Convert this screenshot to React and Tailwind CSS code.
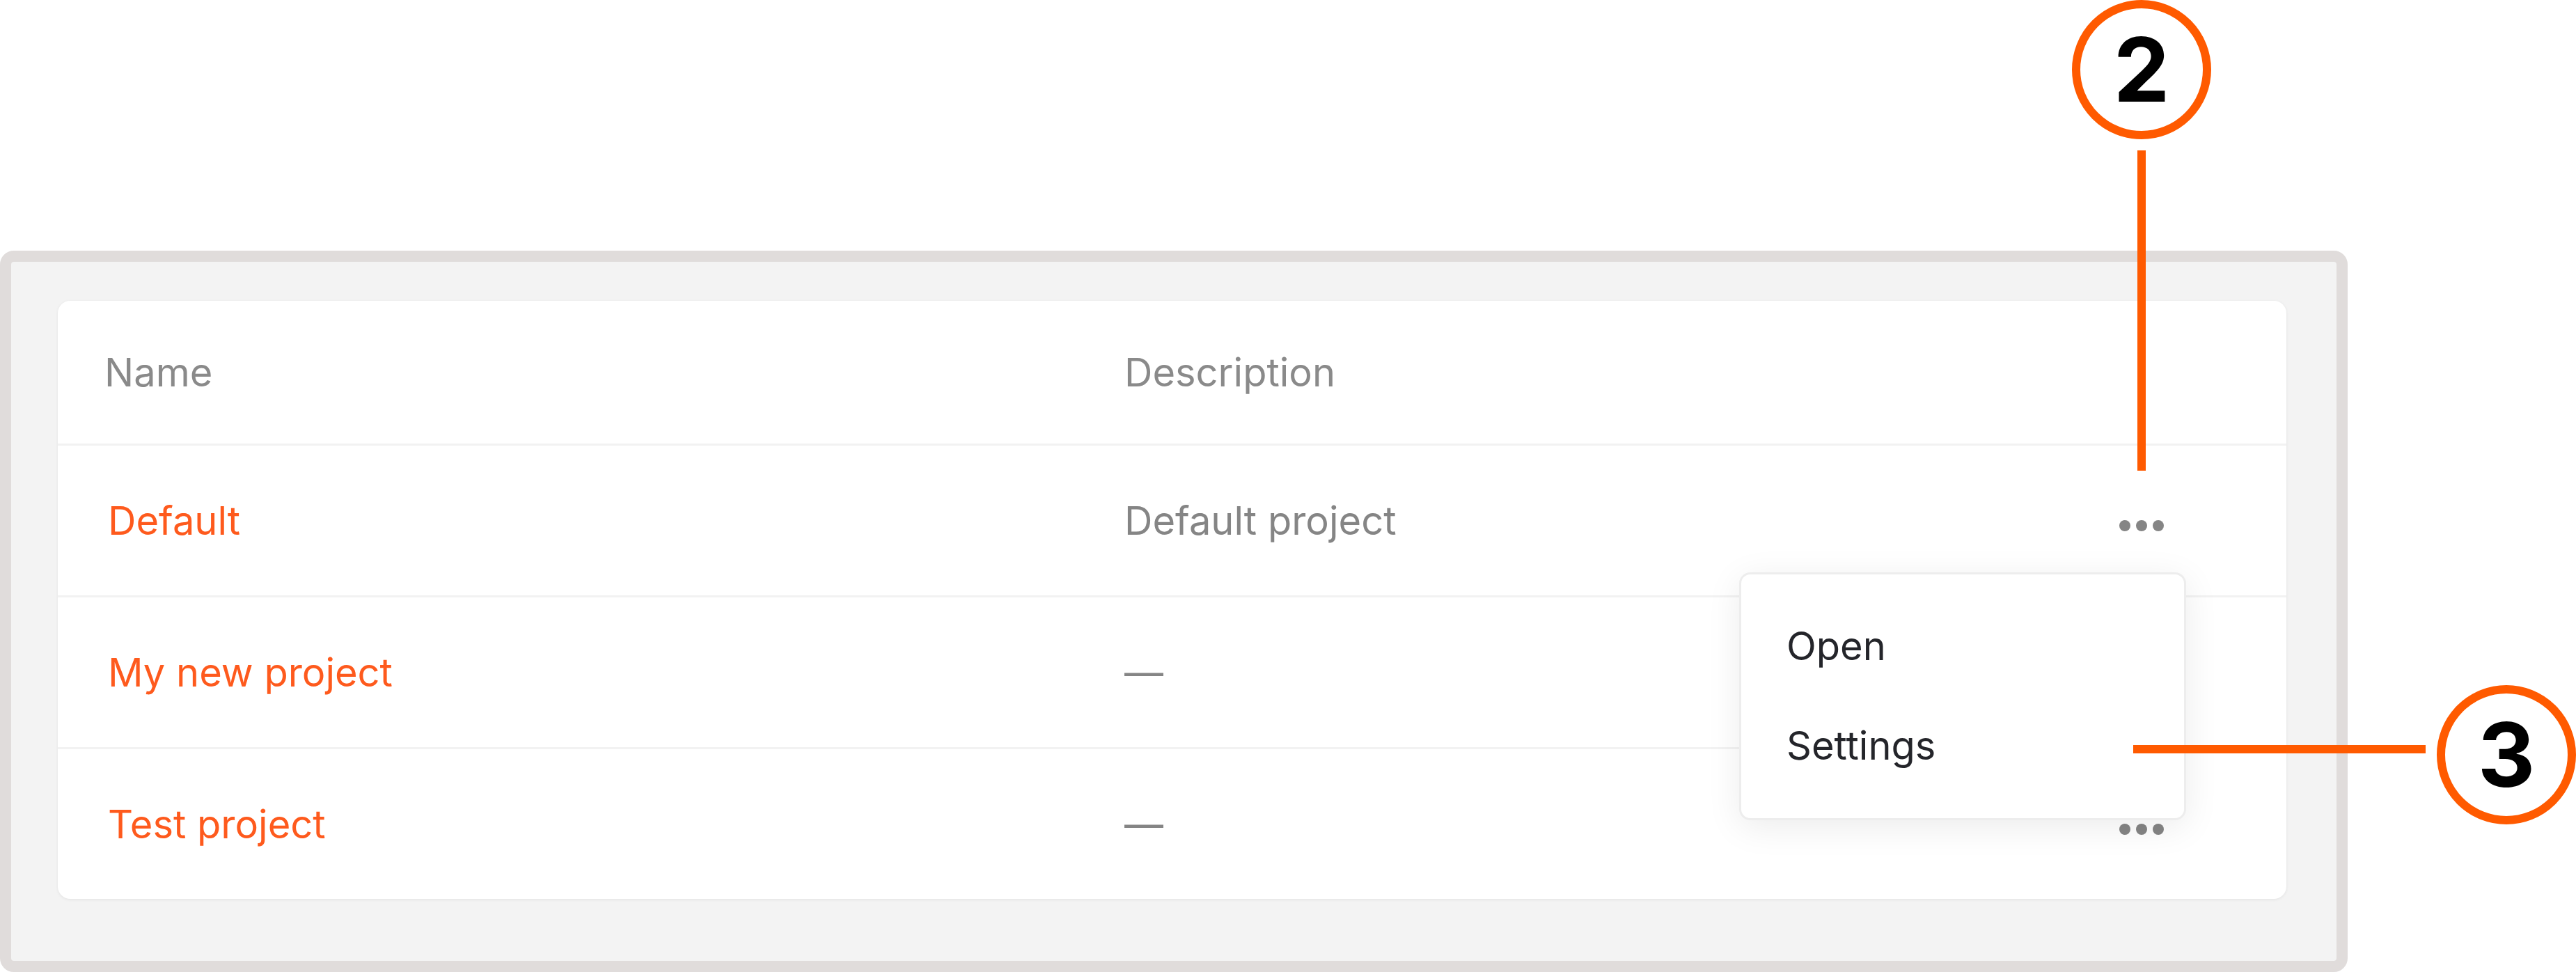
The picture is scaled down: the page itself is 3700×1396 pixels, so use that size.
import React from 'react';

const projects = [
    { id: 1, name: 'Default', description: 'Default project' },
    { id: 2, name: 'My new project', description: null },
    { id: 3, name: 'Test project', description: null },
];

const Dots = () => (
    <div className="flex items-center gap-[8px] mt-[14px]">
        {[0, 1, 2].map((i) => (
            <span key={i} className="w-[16px] h-[16px] rounded-full bg-[#858585]" />
        ))}
    </div>
);

const Marker = ({ label, className }) => (
    <div
        className={`absolute w-[200px] h-[200px] rounded-full border-[12px] border-[#ff5a00] bg-white flex items-center justify-center ${className}`}
    >
        <span className="text-[128px] font-bold leading-none text-black">{label}</span>
    </div>
);

const App = () => {
    return (
        <main className="relative w-[3700px] h-[1396px] bg-white overflow-hidden font-['Inter','Noto_Sans',sans-serif]">
            <section className="mt-[360px] w-[3372px] h-[1036px] border-[16px] border-[#e0dcdb] rounded-[20px] bg-[#f3f3f3] pt-[56px] pl-[67px] pr-[72px]">
                <div className="relative bg-white rounded-[18px] shadow-[0_1px_4px_rgba(0,0,0,0.07)]">
                    <div className="h-[205px] flex items-center pl-[67px] text-[56px] text-[#8a8a8a]">
                        <div className="w-[1465px]">Name</div>
                        <div className="flex-1">Description</div>
                    </div>

                    {projects.map((p) => (
                        <div
                            key={p.id}
                            className="h-[218px] border-t-[3px] border-[#f2f2f2] flex items-center pl-[72px] pr-[176px] text-[56px]"
                        >
                            <div className="w-[1460px] text-[#fe5a1d]">{p.name}</div>
                            <div className="flex-1 text-[#858585]">{p.description ?? '—'}</div>
                            <Dots />
                        </div>
                    ))}

                    {/* open row menu */}
                    <div className="absolute top-[390px] right-[144px] w-[642px] h-[356px] bg-white rounded-[16px] border-[3px] border-[#ededed] shadow-[0_10px_50px_rgba(0,0,0,0.08)] py-[31px] text-[56px] text-[#24252a]">
                        <div className="h-[143px] flex items-center pl-[65px]">Open</div>
                        <div className="h-[143px] flex items-center pl-[65px]">Settings</div>
                    </div>
                </div>
            </section>

            {/* callouts */}
            <Marker label="2" className="left-[2976px] top-0" />
            <div className="absolute left-[3070px] top-[216px] w-[12px] h-[460px] bg-[#ff5a00]" />
            <div className="absolute left-[3064px] top-[1070px] w-[420px] h-[12px] bg-[#ff5a00]" />
            <Marker label="3" className="left-[3500px] top-[984px]" />
        </main>
    );
};

export default App;
